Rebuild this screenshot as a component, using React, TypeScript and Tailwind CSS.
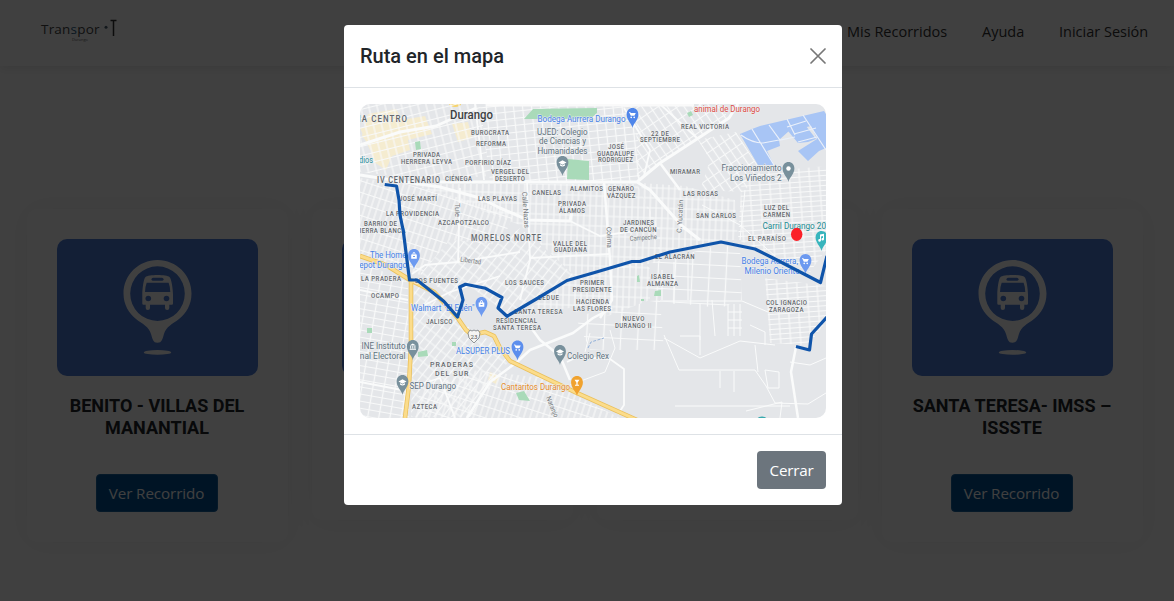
import React from "react";

const NAV_LINKS = [
  { label: "Mis Recorridos", cls: "w-[101px]" },
  { label: "Ayuda", cls: "w-[43px]" },
  { label: "Iniciar Sesión", cls: "w-[90px]" },
];

const ROUTES = [
  "BENITO - VILLAS DEL MANANTIAL",
  "CENTRO - JARDINES",
  "PRADERAS DEL SUR",
  "SANTA TERESA- IMSS – ISSSTE",
];

function BusPin() {
  return (
    <svg viewBox="0 0 201 137" className="block h-[137px] w-[201px] rounded-[10px] bg-[#4c7cd8]">
      <path
        fill="#fff"
        fillRule="evenodd"
        d="M100.500 21C81.600 21 66.500 36 66.500 54.600C66.500 66 72 74.500 79 80C86 85.500 91.500 87 94.200 95.500C95.500 100 96 103.800 100.500 103.800C105 103.800 105.500 100 106.800 95.500C109.500 87 115 85.500 122 80C129 74.500 134.500 66 134.500 54.600C134.500 36 119.400 21 100.500 21ZM100.500 27.300A27.300 27.300 0 1 1 100.500 81.900A27.300 27.300 0 1 1 100.500 27.300Z"
      />
      <ellipse cx="100.500" cy="113.400" rx="13.700" ry="2.400" fill="#fff" />
      <path
        fill="#fff"
        d="M88.500 38C91 35.300 110 35.300 112.500 38C114.500 40 116 50 116 56V64.500Q116 65.800 114.800 65.800H112.300V69Q112.300 71 110.200 71Q108 71 108 69V65.800H93V69Q93 71 90.800 71Q88.700 71 88.700 69V65.800H86.500Q85.300 65.800 85.300 64.500V56C85.300 50 86.500 40 88.500 38Z"
      />
      <rect x="94.500" y="38.700" width="12" height="3" rx="1.500" fill="#4c7cd8" />
      <path d="M89.700 43.700H111.600Q113 47 113.300 53H88Q88.300 47 89.700 43.700Z" fill="#4c7cd8" />
      <circle cx="91.300" cy="59.500" r="2.800" fill="#4c7cd8" />
      <circle cx="109.500" cy="59.500" r="2.800" fill="#4c7cd8" />
    </svg>
  );
}

function RouteCard({ title }: { title: string }) {
  return (
    <article className="flex w-[261px] flex-col items-center rounded-[10px] bg-white p-[30px] shadow-[0_0_30px_rgba(0,0,0,0.06)]">
      <BusPin />
      <h5 className="mt-[19px] mr-px text-center font-[Roboto,sans-serif] text-[18px] leading-[22px] font-bold text-[#212529]">
        {title}
      </h5>
      <button className="mt-[35px] mr-[2px] h-[38px] w-[122px] rounded-[4px] border border-[#1b639f] bg-[#005094] text-center text-[15.2px] tracking-[-0.1px] whitespace-nowrap text-white">
        Ver Recorrido
      </button>
    </article>
  );
}

// text, left x, baseline, width, size, color
type Label = [string, number, number, number, number?, string?];

const GRAY = "#63676c";
const BLUE = "#4580e6";
const SLATE = "#5f717e";

const LABELS: Label[] = [
  ["NA CENTRO", 355, 122, 52, 9],
  ["BUROCRATA", 471, 135.3, 38],
  ["REFORMA", 476, 146.300, 30],
  ["PRIVADA", 413, 157, 27],
  ["HERRERA LEYVA", 401, 163.800, 51],
  ["PORFIRIO DÍAZ", 465, 164.500, 46],
  ["VERGEL DEL", 491, 174, 38],
  ["DESIERTO", 495, 181, 30],
  ["IV CENTENARIO", 377, 183, 63, 8.300],
  ["CIÉNEGA", 445, 181, 27],
  ["JOSÉ MARTÍ", 399, 201.300, 38],
  ["LAS PLAYAS", 478, 201, 39],
  ["JOSÉ", 608, 148.700, 16],
  ["GUADALUPE", 597, 155.500, 37],
  ["RODRIGUEZ", 598, 162.300, 35],
  ["22 DE", 651, 135.500, 18],
  ["SEPTIEMBRE", 640, 142.300, 40],
  ["ALAMITOS", 570, 191.300, 33],
  ["CANELAS", 532, 194.800, 29],
  ["GENARO", 608, 191.300, 26],
  ["VÁZQUEZ", 607, 198.300, 28.500],
  ["PRIVADA", 558, 206, 28],
  ["ÁLAMOS", 559, 213, 26],
  ["REAL VICTORIA", 681, 128.500, 48],
  ["MIRAMAR", 670, 174, 30],
  ["LAS ROSAS", 683, 196.300, 35],
  ["LUZ DEL", 764, 210, 25],
  ["CARMEN", 763, 217, 27],
  ["SAN CARLOS", 696, 218.300, 40],
  ["EL PARAÍSO", 748, 240.500, 38],
  ["EL ALACRÁN", 655, 258.500, 39.500],
  ["COL IGNACIO", 766, 304.500, 41],
  ["ZARAGOZA", 769, 311.500, 34.500],
  ["LA PROVIDENCIA", 386, 215.500, 53],
  ["BARRIO DE", 364, 225.800, 33],
  ["TIERRA BLANCA", 355.500, 233, 50],
  ["AZCAPOTZALCO", 438, 225.300, 51],
  ["MORELOS NORTE", 471, 241, 70, 8.300],
  ["LA PRADERA", 361, 280.500, 40],
  ["LOS FUENTES", 415, 282.500, 43],
  ["OCAMPO", 371, 297.800, 28],
  ["VALLE DEL", 553, 245.500, 34],
  ["GUADIANA", 554, 252.300, 33],
  ["JARDINES", 623, 224.500, 31],
  ["DE CANCÚN", 620, 231.500, 36.500],
  ["LOS SAUCES", 505, 284.500, 39],
  ["PRIMER", 580, 284.500, 24],
  ["PRESIDENTE", 572.500, 291.500, 39],
  ["SEDUE", 538, 300.300, 21],
  ["HACIENDA", 576, 304, 33],
  ["LAS FLORES", 573, 310.800, 38],
  ["SANTA TERESA", 514, 314.300, 48.500],
  ["ISABEL", 651, 279.300, 23],
  ["ALMANZA", 647, 286, 31],
  ["RESIDENCIAL", 496, 323, 41],
  ["SANTA TERESA", 493, 329.800, 48],
  ["NUEVO", 622.500, 321, 22],
  ["DURANGO II", 615, 328, 36.500],
  ["JALISCO", 426, 324, 26.500],
  ["PRADERAS", 430, 366.500, 43, 8],
  ["DEL SUR", 435, 375.500, 33.500, 8],
  ["AZTECA", 412, 409, 25],
  ["dios", 359, 162.700, 14, 9.500, "#2a8d9c"],
  ["Bodega Aurrera Durango", 537.500, 122, 88, 9.500, BLUE],
  ["UJED: Colegio", 537, 134.800, 50.500, 9.500, SLATE],
  ["de Ciencias y", 539, 144.300, 47, 9.500, SLATE],
  ["Humanidades", 537.500, 153.800, 50, 9.500, SLATE],
  ["animal de Durango", 694, 112, 66, 9.500, "#dc4b45"],
  ["Fraccionamiento", 721.500, 171, 60, 9.500, SLATE],
  ["Los Viñedos 2", 730, 180.500, 51.500, 9.500, SLATE],
  ["Carril Durango 20", 762.500, 229, 63.500, 9.500, "#218b91"],
  ["Bodega Aurrera,", 741.500, 264, 56.500, 9.500, BLUE],
  ["Milenio Oriente", 744.500, 273.500, 55, 9.500, BLUE],
  ["The Home", 370, 258, 36.500, 9.500, BLUE],
  ["Depot Durango", 354, 267.800, 53, 9.500, BLUE],
  ["Walmart \"El Edén\"", 411, 311, 63.500, 9.500, BLUE],
  ["ALSUPER PLUS", 456, 354, 54, 9.500, BLUE],
  ["INE Instituto", 361.500, 349, 44, 9.500, SLATE],
  ["onal Electoral", 355, 358.800, 50.500, 9.500, SLATE],
  ["SEP Durango", 409.500, 389, 46.500, 9.500, SLATE],
  ["Colegio Rex", 567, 359, 42, 9.500, SLATE],
  ["Cantaritos Durango", 501, 390, 69, 9.500, "#e58a2c"],
];

// street name, x, y, rotation, width
const STREETS: [string, number, number, number, number][] = [
  ["Tule", 455, 203, 90, 14],
  ["Calle Nazas", 522, 192, 86, 36],
  ["Colima", 606.500, 227, 88, 21],
  ["C. Yucatán", 681.500, 233, -87, 33],
  ["Libertad", 460, 261.500, 8, 21],
  ["Campeche", 630, 241, -4, 27],
  ["Naranjo", 546, 397.500, 68, 22],
];

const PINS: [number, number, string, string][] = [
  [562.500, 176, "#78909c", "cap"],
  [632.500, 128, "#4f86ea", "cart"],
  [788.500, 182, "#78909c", "dot"],
  [821.500, 251, "#38b5bd", "note"],
  [805.500, 274, "#6d9af0", "cart"],
  [414, 269, "#6d9af0", "bag"],
  [481.500, 317, "#6d9af0", "bag"],
  [517.500, 360.500, "#5c8eed", "cart"],
  [412.800, 360, "#78909c", "bank"],
  [402.500, 395, "#78909c", "cap"],
  [560, 365, "#78909c", "cap"],
  [577, 396, "#f0a22e", "glass"],
];

const GLYPHS: Record<string, React.ReactNode> = {
  cap: <path d="M-4 -13.500L0 -15.700L4 -13.500L0 -11.300ZM-2.400 -12V-10.300Q0 -8.800 2.400 -10.300V-12L0 -10.600Z" />,
  cart: (
    <g>
      <path d="M-3.500 -16H-2.300L-1.800 -15H3.300L1.900 -12.300H-1.700Z" />
      <circle cx="-1.300" cy="-10.600" r=".8" />
      <circle cx="1.700" cy="-10.600" r=".8" />
    </g>
  ),
  dot: <circle cy="-13.500" r="2.200" />,
  note: <path d="M-1.500 -16.500L2.500 -17.200V-12A1.300 1.300 0 1 1 1.500 -13V-15L-.5 -14.600V-10.700A1.400 1.400 0 1 1 -1.500 -12Z" />,
  bag: <path fillRule="evenodd" d="M-2.800 -14.500H-1.600Q-1.400 -17 0 -17Q1.400 -17 1.600 -14.500H2.800V-10.300H-2.800ZM-.8 -14.500H.8Q.7 -16 0 -16Q-.7 -16 -.8 -14.500ZM-1 -13V-12H1V-13Z" />,
  bank: <path d="M-3.200 -14.600L0 -16.600L3.200 -14.600ZM-2.600 -14H-1.600V-11.500H-2.600ZM-.5 -14H.5V-11.500H-.5ZM1.600 -14H2.600V-11.500H1.600ZM-3.200 -11.200H3.200V-10.200H-3.200Z" />,
  glass: <path d="M-2.500 -16.300H2.500L.6 -13.500V-11.300H2V-10.300H-2V-11.300H-.6V-13.500Z" />,
};

// street blocks: polygon and the pattern that fills it
const BLOCKS: [string, string][] = [
  ["360,104 480,104 490,176 430,180 360,172", "gridA"],
  ["480,104 636,104 640,181 490,181", "gridB"],
  ["636,104 720,104 728,118 660,162 637,180", "gridC"],
  ["360,178 405,184 460,198 515,212 500,245 450,240 420,275 360,254", "gridD"],
  ["412,184 637,184 660,230 660,262 575,276 520,225", "gridE"],
  ["420,274 450,240 500,244 520,228 575,276 508,314 465,283 455,300", "gridF"],
  ["640,183 685,186 735,200 738,240 720,240 660,255", "gridE"],
  ["698,140 736,132 758,166 745,192 700,190 710,160", "gridC"],
  ["742,174 826,166 826,250 810,272 775,256 738,240", "gridG"],
  ["565,282 640,262 650,268 650,300 608,316 588,305 520,316", "gridE"],
  ["360,262 408,282 409,418 360,418", "gridH"],
  ["414,282 455,318 492,342 508,362 470,417 411,417", "gridF"],
  ["420,392 470,370 545,378 577,396 620,418 415,418", "gridD"],
  ["650,263 720,245 740,248 742,300 720,308 650,300", "gridI"],
  ["765,278 826,286 826,322 808,345 770,343", "gridG"],
  ["575,316 660,300 664,350 590,350", "gridI"],
];

const PATTERNS: [string, number, number, number][] = [
  ["gridA", -14, 8, 9],
  ["gridB", -6, 9, 7],
  ["gridC", -34, 7, 11],
  ["gridD", 18, 6, 11],
  ["gridE", 2, 6, 10],
  ["gridF", 38, 7, 10],
  ["gridG", -4, 10, 5],
  ["gridH", 10, 11, 7],
  ["gridI", 3, 17, 13],
];

function RouteMap() {
  return (
    <svg viewBox="360 104 466 314" className="block h-[314px] w-[466px] rounded-[10px]">
      <defs>
        {PATTERNS.map(([id, angle, w, h]) => (
          <pattern key={id} id={id} width={w} height={h} patternUnits="userSpaceOnUse" patternTransform={`rotate(${angle})`}>
            <path d={`M0 ${h / 2}H${w}M${w / 2} 0V${h}`} stroke="#f8f9f9" strokeWidth="1.200" fill="none" />
          </pattern>
        ))}
      </defs>
      <rect x="360" y="104" width="466" height="314" fill="#e4e6e9" />

      <g fill="#f5ecd0">
        <path d="M368 114L396 109L402 120L425 116L432 134L408 140L410 150L392 156L386 170L374 162L370 146L362 136Z" />
        <path d="M360 128L385 124L392 146L370 150ZM452 124L468 122L472 138L458 142ZM490 372L500 376L496 384L488 380Z" />
        <ellipse cx="455" cy="104" rx="6" ry="3" fill="#f6d36c" />
      </g>

      {BLOCKS.map(([points, pattern], i) => (
        <polygon key={i} points={points} fill={`url(#${pattern})`} />
      ))}

      <g fill="none" stroke="#fafbfb" strokeLinejoin="round">
        <path strokeWidth="3" d="M360 175L405 182L440 187L480 198L500 208L528 220L570 221L574 200M440 182H637L660 163L700 137L729 118L738 104M360 145L400 132L436 126L476 108M637 182L650 190L682 226L700 240" />
        <path strokeWidth="2.500" d="M517 362L530 350L573 333L593 318L612 308M467 418L490 382L517 362M796 347L791 372L798 418M604 181L610 260L612 300L600 318M524 318L540 340L560 356L570 380M660 163L680 190" />
        <path strokeWidth="1.800" d="M412 274L425 265L458 262L520 252M458 262L460 188M360 382L402 390L440 378L455 418M567 362L577 357L610 359L624 369V405L618 414M475 104L484 180M415 310L450 292L500 276M530 258L610 254M660 104L698 139M527 182L530 260L520 300M570 221L600 236L655 228M624 108L650 150L644 176M360 290L408 300" />
        <path strokeWidth="1" d="M664 335L679 370H755L766 386L775 403L808 404L826 393M664 338L700 358L740 341L775 345M720 371V388M734 371V392M675 406H790M700 304V340M712 300L715 336M790 362L810 365L826 358M660 301H742L768 312M745 190L740 240M702 205L740 225L775 256M755 345L758 372M765 345V332L750 325M746 411L782 402L780 418M680 336H700V355M765 370L779 372V388H768Z" />
        <path strokeWidth="1" d="M728 336V304M734 336V304M740 336V304M728 312H742M728 320H742M728 328H742M610 330L615 348L605 372L570 385M590 333L585 352M662 270V300M674 262V304M688 257V300" />
        <path stroke="#8aabd8" strokeWidth=".9" strokeDasharray="3 1.500" d="M588 348L591 342L604 338" />
      </g>

      <g fill="#a9dab9">
        <path d="M533 109L597 108V113L590 119H524ZM568 159L589 161V180L567 179Z" />
        <path d="M415 142L420 141L421 149L416 150ZM418 352L427 350L428 356L418 357ZM367 328H372V333H367ZM452 342H456V346H452ZM687 113L691 111L693 115L689 117Z" />
        <path d="M516 393L524 391L530 401L519 400ZM655 291L661 290V296H654ZM637 276L639 275L640 282L637 282ZM641 299H644V301H641Z" />
      </g>

      <g>
        <path fill="#a8c5f5" d="M740 134L752 129L760 126L824 111L826 114V148L819 151L808 161L798 151L817 139L811 126L789 131L779 140L780 146L767 151L774 165H758Z" />
        <path fill="#a8c5f5" d="M788 131L806 126L816 139L808 142L798 143Z" />
        <path fill="none" stroke="#eaf0fa" strokeWidth="1.200" d="M741 135Q752 143 763 143L779 140M752 129L774 165M769 125L780 140L795 137M787 119L795 135M787 127L806 121M803 115L826 150M794 134L816 128M798 142L817 137" />
      </g>

      <g fill="none" strokeLinejoin="round">
        <path stroke="#eabf59" strokeWidth="4.500" d="M360 256L386 265L410 280L434 292L457 317L466 330L472 335L485 332L494 336L500 348L510 361L537 374L577 393L637 420M411 280V345L409 385L405 418" />
        <path stroke="#fbdc8b" strokeWidth="3" d="M360 256L386 265L410 280L434 292L457 317L466 330L472 335L485 332L494 336L500 348L510 361L537 374L577 393L637 420M411 280V345L409 385L405 418" />
      </g>
      <path d="M470 330L472 331L474 330L476 331L478 330L480 333L479 338L474 343L469 338L468 333Z" fill="#f5f5f3" stroke="#777c80" strokeWidth=".8" />
      <text x="470.500" y="338.800" textLength="7" lengthAdjust="spacingAndGlyphs" fontSize="6" fill="#555">23</text>

      <g stroke="#eff1f2" strokeWidth="1" strokeLinejoin="round" className="[paint-order:stroke]">
        {LABELS.map(([text, x, y, width, size = 6.900, color = GRAY], i) =>
          color === GRAY ? (
            <text
              key={i}
              transform={`translate(${x} ${y}) scale(0.88 1)`}
              textLength={width / 0.88}
              fontSize={size}
              fill={color}
              className="font-medium"
            >
              {text}
            </text>
          ) : (
            <text key={i} x={x} y={y} textLength={width} lengthAdjust="spacingAndGlyphs" fontSize={size} fill={color}>
              {text}
            </text>
          ),
        )}
        {STREETS.map(([text, x, y, angle, width]) => (
          <text key={text} transform={`translate(${x} ${y}) rotate(${angle})`} textLength={width} lengthAdjust="spacingAndGlyphs" fontSize="7" fill="#73777b">
            {text}
          </text>
        ))}
        <text x="450" y="119.300" textLength="43" lengthAdjust="spacingAndGlyphs" fontSize="13" fill="#3c4043" className="font-medium">
          Durango
        </text>
      </g>

      {PINS.map(([x, y, color, glyph], i) => (
        <g key={i} transform={`translate(${x} ${y})`}>
          <path d="M0 0C-.8 -4.500 -5.900 -8 -5.900 -13.500C-5.900 -17.500 -3.300 -20 0 -20C3.300 -20 5.900 -17.500 5.900 -13.500C5.900 -8 .8 -4.500 0 0Z" fill={color} />
          <g fill="#fff">{GLYPHS[glyph]}</g>
        </g>
      ))}
      <ellipse cx="762" cy="419" rx="4.500" ry="2.500" fill="#38a9ae" />
      <ellipse cx="796.700" cy="234.300" rx="5.700" ry="6.600" fill="#fb2028" />

      <g fill="none" stroke="#0f54aa" strokeWidth="3.200" strokeLinejoin="round">
        <path d="M384.700 184.500L396.500 186L399 200L400 215L403.300 231L409.500 280H417L444 301.500L457.500 317L463 300L459.700 287L465.500 284.300L485.500 288.300L502 297.500L498 308L507 316.300L538 298L567 280.500L593 273L632 261.500H640L670 252L721 242L755 249L773 258L820.500 282.500L827 256" />
        <path d="M827 317L811.500 334L809.500 350L796 346.500" />
      </g>
      <path d="M486 104H694V106.500H486Z" fill="#fafafa" />
    </svg>
  );
}

function Logo() {
  return (
    <svg viewBox="0 0 80 26" className="h-[26px] w-[80px]">
      <text x="1" y="16.500" textLength="58.500" fontSize="13.500" fill="#444" className="font-[Open_Sans,sans-serif]">
        Tran<tspan fill="#2c6186">s</tspan>por
      </text>
      <circle cx="66" cy="10.300" r="1.500" fill="#4c6272" />
      <path d="M70.500 3.500H76.500M73.500 3V19" stroke="#333" strokeWidth="1.500" />
      <text x="32" y="24" textLength="16" fontSize="4" fill="#666" className="font-[Open_Sans,sans-serif]">
        Durango
      </text>
    </svg>
  );
}

export default function App() {
  return (
    <div className="relative h-[601px] w-[1174px] overflow-hidden bg-white font-[Open_Sans,sans-serif]">
      <header className="flex h-[66px] items-start justify-between pt-[17px] pr-[25px] pl-[40px] shadow-[0_2px_10px_rgba(0,0,0,0.1)]">
        <Logo />
        <nav className="flex gap-[34px] pt-[3px]">
          {NAV_LINKS.map(({ label, cls }) => (
            <a key={label} className={`${cls} text-[14.5px] leading-[24px] whitespace-nowrap text-[#333]`}>
              {label}
            </a>
          ))}
        </nav>
      </header>
      <main className="flex items-start gap-[24px] pt-[143px] pl-[27px]">
        {ROUTES.map((title) => (
          <RouteCard key={title} title={title} />
        ))}
      </main>

      <div className="absolute inset-0 flex items-start justify-center bg-black/75 pt-[25px] pl-[12px]">
        <section className="w-[498px] rounded-[4px] bg-white">
          <header className="flex h-[63px] items-center justify-between border-b border-[#dee2e6] px-4">
            <h5 className="font-[Roboto,sans-serif] text-[20px] leading-[30px] font-medium text-[#212529]">Ruta en el mapa</h5>
            <svg viewBox="0 0 16 16" className="h-4 w-4" fill="none" stroke="#777" strokeWidth="1.700" strokeLinecap="round">
              <path d="M1 1L15 15M15 1L1 15" />
            </svg>
          </header>
          <div className="p-4 font-[Roboto,sans-serif]">
            <RouteMap />
          </div>
          <footer className="flex justify-end border-t border-[#dee2e6] p-4">
            <button className="h-[38px] w-[69px] rounded-[4px] bg-[#6c757d] text-center text-[15.2px] tracking-[-0.2px] text-white">Cerrar</button>
          </footer>
        </section>
      </div>
    </div>
  );
}
